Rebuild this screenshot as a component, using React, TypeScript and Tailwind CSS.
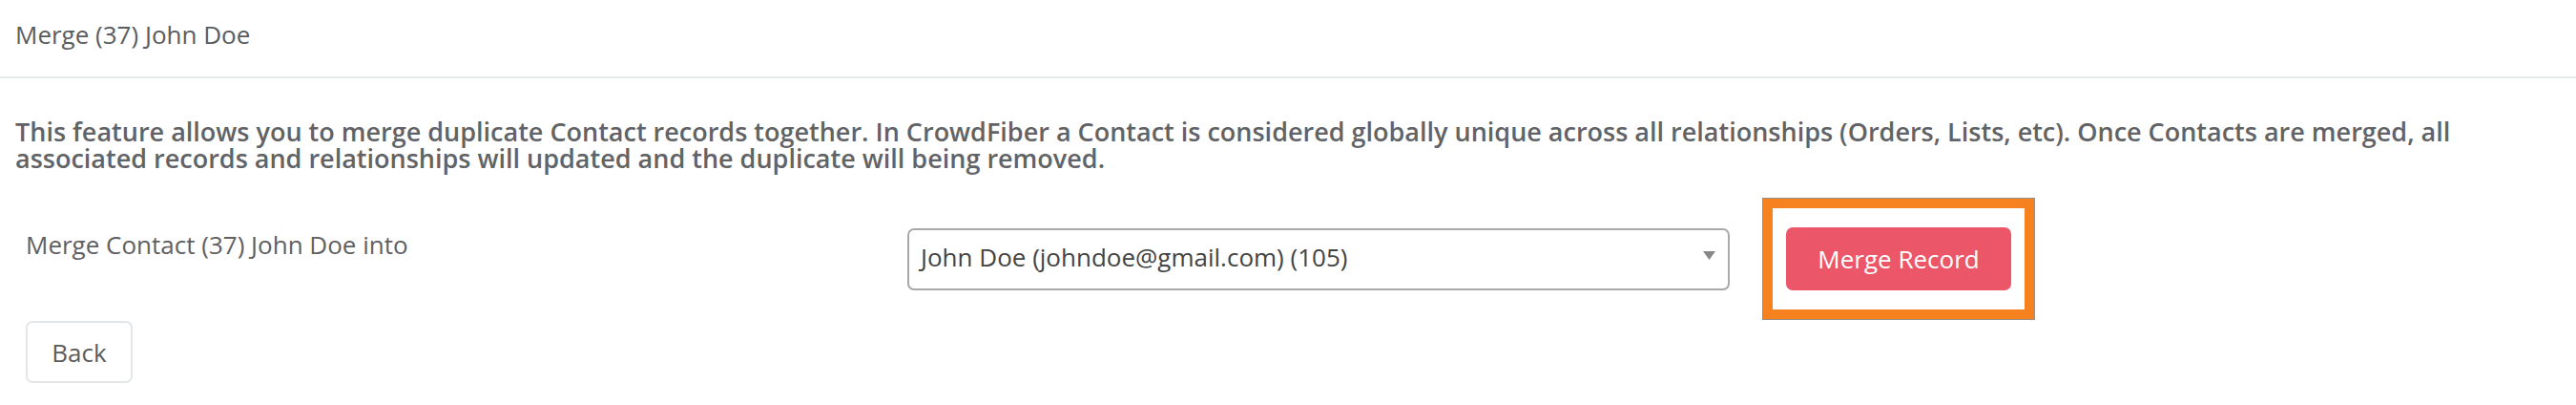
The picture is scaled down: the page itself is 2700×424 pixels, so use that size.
import React from 'react';

export default function App() {
  return (
    <div className="min-h-[424px] w-full bg-white font-['Open_Sans',sans-serif] text-[26px]">
      <header className="h-[82px] border-b-2 border-[#e6eaea] px-[16px] pt-[18px]">
        <h1 className="leading-[36px] font-normal text-[#5b5c5e]">Merge (37) John Doe</h1>
      </header>

      <div className="px-[16px] pt-[42px]">
        <p className="text-[27px] font-semibold leading-[28px] text-[#616366]">
          This feature allows you to merge duplicate Contact records together. In CrowdFiber a Contact is considered
          globally unique across all relationships (Orders, Lists, etc). Once Contacts are merged, all associated records
          and relationships will updated and the duplicate will being removed.
        </p>
      </div>

      <div className="mt-[28px] flex items-start pl-[27px]">
        <label className="mt-[30px] w-[924px] shrink-0 leading-[36px] text-[#5f6062]">
          Merge Contact (37) John Doe into
        </label>

        <div className="mt-[31px] flex h-[65px] w-[862px] shrink-0 items-center justify-between rounded-[7px] border-2 border-[#a9a9a9] pl-[12px] pr-[13px]">
          <span className="pb-[6px] leading-[36px] text-[#444444]">John Doe (johndoe@gmail.com) (105)</span>
          <svg width="13" height="9" viewBox="0 0 13 9" className="mb-[8px]">
            <path d="M0 0h13L6.5 9z" fill="#888888" />
          </svg>
        </div>

        <div className="ml-[35px] shrink-0 border-[10px] border-[#f5821f] bg-white px-[14px] py-[20px] shadow-[0_0_0_1px_#9a8f86]">
          <button className="flex h-[66px] w-[236px] items-center justify-center rounded-[7px] bg-[#eb5668] leading-[36px] text-white">
            Merge Record
          </button>
        </div>
      </div>

      <div className="mt-[2px] pl-[27px]">
        <button className="flex h-[65px] w-[112px] items-center justify-center rounded-[7px] border-2 border-[#e3e6e8] bg-white leading-[36px] text-[#5c5c5c]">
          Back
        </button>
      </div>
    </div>
  );
}
